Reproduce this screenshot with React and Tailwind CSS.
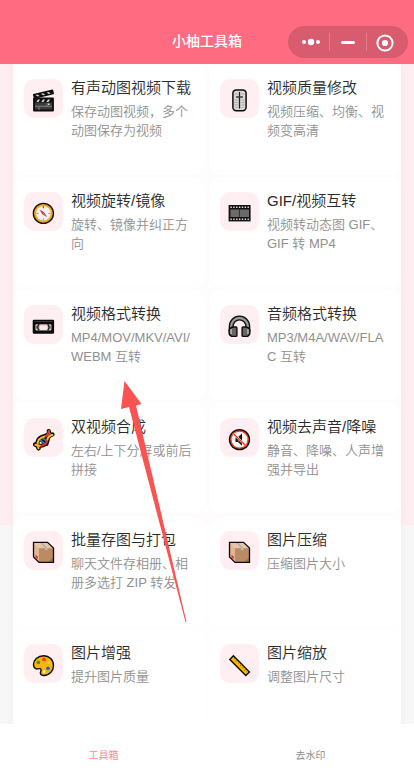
function ClapperIcon() {
  return (
    <svg width="23" height="23" viewBox="0 0 23 23" aria-hidden="true">
      <path d="M2 9.5h19v12H2z" fill="#3c3c3c" stroke="#0c0c0c" strokeWidth="1.8" strokeLinejoin="round" />
      <path d="M3 10h17v3.5H3z" fill="#111" />
      <path d="M4.4 13l1.6-2.4h2L6.4 13zM9.4 13l1.6-2.4h2L11.4 13zM14.4 13l1.6-2.4h2L16.4 13z" fill="#dcdcdc" />
      <path d="M1.6 5.6L20.5 1.3l.8 3.2L2.6 9z" fill="#111" stroke="#0c0c0c" strokeWidth="1.4" strokeLinejoin="round" />
      <path d="M3.5 5.9l2-.5 2.2 1.7-2 .5zM9 4.7l2-.5 2.2 1.6-2 .5zM14.6 3.4l2-.4 2.2 1.6-2 .5z" fill="#d4d4d4" />
      <path d="M3 17.3h17M7 18v3M15 14v3" stroke="#8f8f8f" strokeWidth="0.8" />
      <path d="M16 14.5h1.5v1.5H16z" fill="#e8e8e8" />
    </svg>
  );
}

function SliderIcon() {
  return (
    <svg width="23" height="23" viewBox="0 0 23 23" aria-hidden="true">
      <rect x="4.9" y="0.9" width="13.2" height="20.8" rx="3.4" fill="#d9d9d9" stroke="#0c0c0c" strokeWidth="1.5" />
      <path
        d="M6.5 5h3M13.5 5h3M6.5 11h3M13.5 11h3M6.5 13.5h3M13.5 13.5h3M6.5 16h3M13.5 16h3M7.5 18.5h2M13.5 18.5h2"
        stroke="#a0a0a0"
        strokeWidth="0.9"
      />
      <path d="M11.5 3v16.5" stroke="#1d1d1d" strokeWidth="1.3" />
      <path d="M8 8h7" stroke="#333" strokeWidth="1.4" />
    </svg>
  );
}

function CompassIcon() {
  return (
    <svg width="23" height="23" viewBox="0 0 23 23" aria-hidden="true">
      <circle cx="11.4" cy="11.4" r="10.7" fill="#0c0c0c" />
      <circle cx="11.4" cy="11.4" r="9.4" fill="#f0a51c" />
      <circle cx="11.4" cy="11.4" r="7.3" fill="#f4f2f0" />
      <path d="M11.4 4.5v2M11.4 16.4v2M4.5 11.4h2M16.4 11.4h2" stroke="#8d8d8d" strokeWidth="1" />
      <path d="M11.4 4.3v1.7" stroke="#d93535" strokeWidth="1.2" />
      <path d="M7.5 7.5l4.9 2.9-2 2z" fill="#e03131" />
      <path d="M15.3 15.3l-4.9-2.9 2-2z" fill="#777" />
    </svg>
  );
}

function FilmIcon() {
  return (
    <svg width="23" height="23" viewBox="0 0 23 23" aria-hidden="true">
      <rect x="0.6" y="3" width="22" height="16.4" fill="#101010" />
      <path d="M2.4 5.3h18.6M2.4 17.2h18.6" stroke="#e6e6e6" strokeWidth="1.5" strokeDasharray="1.4 1.45" />
      <path d="M2.4 7.6h8.8v7.3H2.4zM11.8 7.6h9.2v7.3h-9.2z" fill="#6b6b6b" />
    </svg>
  );
}

function CassetteIcon() {
  return (
    <svg width="23" height="23" viewBox="0 0 23 23" aria-hidden="true">
      <rect x="0.7" y="4.7" width="21.4" height="14" rx="1.2" fill="#0b0b0b" />
      <path d="M2.3 6.6h18.2" stroke="#3d3d3d" strokeWidth="1" />
      <rect x="3.4" y="9.2" width="16" height="6.2" rx="0.8" fill="#cfcfcf" />
      <path d="M7.2 9.2a4 4 0 0 0 0 6.2M15.6 9.2a4 4 0 0 1 0 6.2" stroke="#151515" strokeWidth="1.4" fill="none" />
      <path d="M4.8 11v2.6M18 11v2.6" stroke="#333" strokeWidth="0.9" />
      <rect x="8" y="9.8" width="6.8" height="5.2" fill="#f3ecec" />
      <path d="M8 9.8h6.8" stroke="#e5686b" strokeWidth="0.8" />
    </svg>
  );
}

function HeadphonesIcon() {
  return (
    <svg width="23" height="23" viewBox="0 0 23 23" aria-hidden="true">
      <path d="M3.2 16v-4.5a8.3 8.5 0 0 1 16.6 0V16" fill="none" stroke="#0c0c0c" strokeWidth="5" />
      <path d="M3.2 16v-4.5a8.3 8.5 0 0 1 16.6 0V16" fill="none" stroke="#9c9c9c" strokeWidth="2.4" />
      <path d="M8 12H5.2Q1 12.6 1 16.4q.1 4 2.6 5H8q.9 0 .9-1v-7.4q0-1-.9-1z" fill="#666" stroke="#0c0c0c" strokeWidth="1.4" />
      <path d="M15 12h2.8q4.2.6 4.2 4.4-.1 4-2.6 5H15q-.9 0-.9-1v-7.4q0-1 .9-1z" fill="#666" stroke="#0c0c0c" strokeWidth="1.4" />
      <path d="M3.1 14v5M19.9 14v5" stroke="#b5b5b5" strokeWidth="1.5" />
    </svg>
  );
}

function DnaIcon() {
  return (
    <svg width="23" height="23" viewBox="0 0 23 23" aria-hidden="true">
      <g fill="none" strokeLinecap="round" strokeLinejoin="round">
        <path d="M3 16.5C7 18.5 14.5 18.5 15.5 12.5 16 9 18 7 20.5 6.5" stroke="#0c0c0c" strokeWidth="4.2" />
        <path d="M6.5 20.5C4 16.5 5.5 10.8 9.5 9.2 13.5 7.5 17.5 7.5 16.8 3" stroke="#0c0c0c" strokeWidth="4.2" />
        <path d="M8 11.5l7 5M10 8.5l5.500 5.500M17 4l2.500 3M4 16l3 4" stroke="#0c0c0c" strokeWidth="3" />
        <path d="M8.500 12l4.500 4M10.800 9.800l4 4M17.500 5.200l1.400 1.400" stroke="#3d7fd6" strokeWidth="1.5" />
        <path d="M6.500 20.300C4.500 16.500 5.500 11.500 9.500 9.700 13.500 8 17.500 7.500 16.800 3.200" stroke="#f5c518" strokeWidth="2" />
        <path d="M3.200 16.700C7 18.500 14 18.300 15.200 12.700 15.900 9 18 7.400 20.400 6.900" stroke="#e02b2b" strokeWidth="2" />
        <path d="M13.500 8.200c2.300-.8 3.500-2.200 3.300-4.700" stroke="#e02b2b" strokeWidth="1.8" />
        <path d="M15.300 11.500c.9-2.800 2.600-4.100 5.100-4.600M3.600 16.900c1.300.6 2.700.9 4 .9" stroke="#f5c518" strokeWidth="1.8" />
      </g>
    </svg>
  );
}

function MutedIcon() {
  return (
    <svg width="23" height="23" viewBox="0 0 23 23" aria-hidden="true">
      <circle cx="11.5" cy="11.6" r="10.7" fill="#0c0c0c" />
      <circle cx="11.5" cy="11.6" r="9.4" fill="#f0401f" />
      <circle cx="11.5" cy="11.6" r="7.9" fill="#fdf7f7" />
      <path d="M7.5 9.2h2.4l4.1-3.7v12.2l-4.100-3.700H7.500z" fill="#151515" />
      <path d="M10.6 9v5.4" stroke="#777" strokeWidth="0.8" />
      <path d="M5.2 5.4l12.6 12.4" stroke="#fdf7f7" strokeWidth="2.2" />
      <path d="M5 5.2l13 12.8" stroke="#f0401f" strokeWidth="1.5" />
    </svg>
  );
}

function BoxIcon() {
  return (
    <svg width="23" height="23" viewBox="0 0 23 23" aria-hidden="true">
      <path d="M7 7.1h14.5v14.3H7z" fill="#bb8c64" />
      <path d="M1.500 1.300h14l6 5.800H7z" fill="#e6c6a5" />
      <path d="M1.500 1.300L7 7.100v14.300L1.500 16z" fill="#e0b794" />
      <path d="M15.500 21.400l6-5.500v5.500z" fill="#9f7048" />
      <path d="M8.400 2h2l5 5.100H13z" fill="#a9afb8" />
      <path d="M13 7.100h2.400v2H13z" fill="#cdbba8" />
      <path d="M3.400 13.800l2.400 1.800v2.600l-2.400-1.800z" fill="#e2353b" />
      <path d="M1.500 1.300h14l6 5.800v14.300H7L1.500 16z" fill="none" stroke="#0c0c0c" strokeWidth="1.3" />
    </svg>
  );
}

function PaletteIcon() {
  return (
    <svg width="23" height="23" viewBox="0 0 23 23" aria-hidden="true">
      <path
        d="M11.8 1.7C5.6 1.7 1.5 6 1.5 10.6c0 3.2 2 4.7 4 4.3 2-.5 3.6-.5 3.6 1.3 0 1.2-.9 1.8-.7 3.1.3 1.3 1.8 2.2 3.4 2.2 5.6 0 9.7-4.4 9.7-10 0-5.7-4.2-9.8-9.7-9.8z"
        fill="#fbb40c"
        stroke="#0c0c0c"
        strokeWidth="1.4"
      />
      <circle cx="6.4" cy="8.4" r="1.8" fill="#27a243" />
      <circle cx="12" cy="5.4" r="1.9" fill="#f0401f" />
      <circle cx="16.8" cy="8.8" r="1.7" fill="#ffd52b" />
      <circle cx="16" cy="14.4" r="1.8" fill="#2559e0" />
      <ellipse cx="12.2" cy="17.7" rx="1.2" ry="1.7" fill="#fff0ca" />
    </svg>
  );
}

function RulerIcon() {
  return (
    <svg width="23" height="23" viewBox="0 0 23 23" aria-hidden="true">
      <path d="M5.4 1.8l16 16.2-3.6 3.6-16-16z" fill="#fbb40c" stroke="#0c0c0c" strokeWidth="1.4" />
      <path
        d="M7.4 3.8L6.2 5M9.5 5.9L7.8 7.6M11.7 8.1l-1.200 1.200M13.800 10.200l-1.700 1.700M16 12.400l-1.200 1.200M18.100 14.500l-1.700 1.700M19.800 16.400l-1 1"
        stroke="#6e4c05"
        strokeWidth="0.8"
      />
    </svg>
  );
}

const tools = [
  { title: '有声动图视频下载', desc: '保存动图视频，多个动图保存为视频', Icon: ClapperIcon },
  { title: '视频质量修改', desc: '视频压缩、均衡、视频变高清', Icon: SliderIcon },
  { title: '视频旋转/镜像', desc: '旋转、镜像并纠正方向', Icon: CompassIcon },
  { title: 'GIF/视频互转', desc: '视频转动态图 GIF、GIF 转 MP4', Icon: FilmIcon },
  { title: '视频格式转换', desc: 'MP4/MOV/MKV/AVI/WEBM 互转', Icon: CassetteIcon },
  { title: '音频格式转换', desc: 'MP3/M4A/WAV/FLAC 互转', Icon: HeadphonesIcon },
  { title: '双视频合成', desc: '左右/上下分屏或前后拼接', Icon: DnaIcon },
  { title: '视频去声音/降噪', desc: '静音、降噪、人声增强并导出', Icon: MutedIcon },
  { title: '批量存图与打包', desc: '聊天文件存相册、相册多选打 ZIP 转发', Icon: BoxIcon },
  { title: '图片压缩', desc: '压缩图片大小', Icon: BoxIcon },
  { title: '图片增强', desc: '提升图片质量', Icon: PaletteIcon },
  { title: '图片缩放', desc: '调整图片尺寸', Icon: RulerIcon },
];

function ToolCard({ title, desc, Icon }) {
  return (
    <button type="button" className="flex h-[109px] items-start gap-2 rounded-xl bg-white px-[11px] pt-[14px] text-left font-[350]">
      <span className="flex size-[39px] shrink-0 items-center justify-center rounded-[10px] bg-[#ffeff2] pt-1">
        <Icon />
      </span>
      <span className="block min-w-0 flex-1">
        <span className="block text-[15px] leading-[17px] text-[#2b2b2b]">{title}</span>
        <span className="mt-[6px] block text-[13px] leading-[19px] break-all text-[#909090]">{desc}</span>
      </span>
    </button>
  );
}

function Capsule() {
  return (
    <div className="flex h-8 w-[120px] items-center justify-self-end rounded-full border border-[#cf5c6f] bg-[#d85c6e]">
      <button type="button" aria-label="更多" className="flex h-full w-10 items-center justify-center pl-1">
        <svg width="20" height="8" viewBox="0 0 20 8" fill="#fff" aria-hidden="true">
          <circle cx="3" cy="4" r="2" />
          <circle cx="10" cy="4" r="3.2" />
          <circle cx="17" cy="4" r="2" />
        </svg>
      </button>
      <span className="h-[18px] w-px bg-[#e57d8c]" />
      <button type="button" aria-label="最小化" className="flex h-full w-9 items-center justify-center">
        <span className="h-[3px] w-[14px] rounded-full bg-white" />
      </button>
      <span className="h-[18px] w-px bg-[#e57d8c]" />
      <button type="button" aria-label="关闭" className="flex h-full flex-1 items-center justify-center pt-px pr-1">
        <svg width="18" height="18" viewBox="0 0 18 18" aria-hidden="true">
          <circle cx="9" cy="9" r="7.6" fill="none" stroke="#fff" strokeWidth="2" />
          <circle cx="9" cy="9" r="3.1" fill="#fff" />
        </svg>
      </button>
    </div>
  );
}

export default function App() {
  return (
    <div className="relative flex h-screen flex-col overflow-hidden bg-white font-['Liberation_Sans','Noto_Sans_CJK_SC',sans-serif]">
      <header className="grid h-16 shrink-0 grid-cols-[1fr_auto_1fr] items-center bg-[#ff6b81] px-[6px] pt-5">
        <span />
        <h1 className="pb-[2px] text-sm font-medium text-white">小柚工具箱</h1>
        <Capsule />
      </header>

      <main className="min-h-0 flex-1 overflow-y-auto bg-[linear-gradient(#ffeef1_461px,#f7f7f7_461px)] px-[13px] [scrollbar-width:none]">
        <div className="grid grid-cols-2 gap-1 bg-white/85 pt-px shadow-[0_0_8px_rgba(0,0,0,0.04)]">
          {tools.map((tool) => (
            <ToolCard key={tool.title} {...tool} />
          ))}
        </div>
      </main>

      <nav className="flex h-14 shrink-0 bg-white text-[10px]">
        <button type="button" className="flex-1 pt-[6px] text-[#ff8597]">工具箱</button>
        <button type="button" className="flex-1 pt-[6px] text-[#8c8c8c]">去水印</button>
      </nav>

      <svg
        className="pointer-events-none absolute top-[381px] left-[121px]"
        width="66"
        height="242"
        viewBox="0 0 66 242"
        aria-hidden="true"
      >
        <path d="M3.5 0l17 23-5.5 1.4L65.5 241 64.500 241 8 26 0 28z" fill="#fb5252" />
      </svg>
    </div>
  );
}
